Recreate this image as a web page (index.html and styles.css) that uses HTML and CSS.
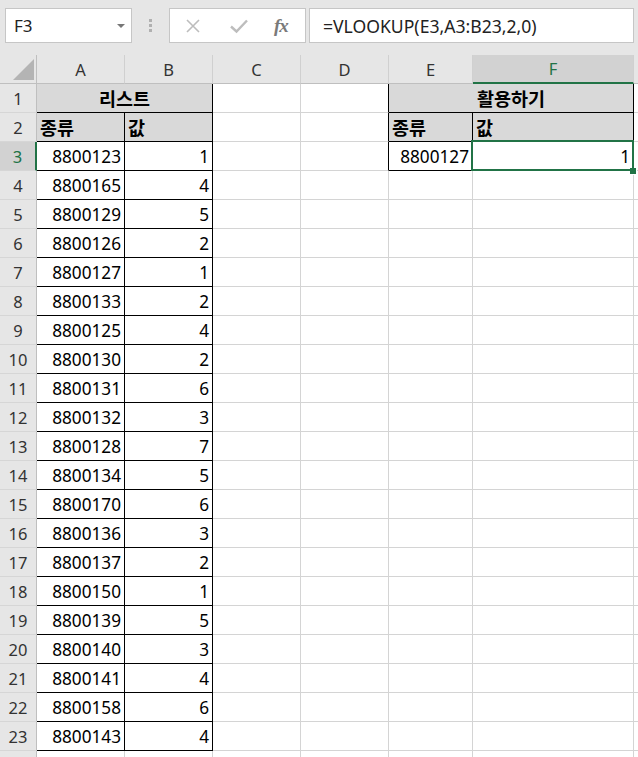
FILE: index.html
```html
<!DOCTYPE html>
<html lang="ko">
<head>
<meta charset="utf-8">
<title>VLOOKUP</title>
<link rel="stylesheet" href="styles.css">
</head>
<body>
<div class="topbar">
  <div class="namebox"><span class="nb-text">F3</span><span class="nb-arrow"></span></div>
  <div class="dots"><i></i><i></i><i></i></div>
  <div class="fxbox">
    <svg class="ico-x" width="16" height="16" viewBox="0 0 16 16"><path d="M2 2L14 14M14 2L2 14" stroke="#bdbdbd" stroke-width="1.6" fill="none"/></svg>
    <svg class="ico-check" width="20" height="16" viewBox="0 0 20 16"><path d="M2 8.5L7.5 13.5L18 2.5" stroke="#bdbdbd" stroke-width="2.4" fill="none"/></svg>
    <span class="fx">fx</span>
  </div>
  <div class="formula">=VLOOKUP(E3,A3:B23,2,0)</div>
</div>

<div class="sheet">
  <div class="row hdr">
    <div class="corner"><svg width="21" height="21" viewBox="0 0 21 21"><path d="M21 0V21H0Z" fill="#b4b4b4"/></svg></div>
    <div class="ch">A</div><div class="ch">B</div><div class="ch">C</div><div class="ch">D</div><div class="ch">E</div><div class="ch sel">F</div><div class="ch last"></div>
  </div>

  <div class="row">
    <div class="rh">1</div>
    <div class="c hd b center span2">리스트</div>
    <div class="c"></div><div class="c bl"></div>
    <div class="c hd b center span2">활용하기</div>
    <div class="c last"></div>
  </div>
  <div class="row">
    <div class="rh">2</div>
    <div class="c hd b">종류</div><div class="c hd b">값</div>
    <div class="c"></div><div class="c bl"></div>
    <div class="c hd b">종류</div><div class="c hd b">값</div>
    <div class="c last"></div>
  </div>
  <div class="row">
    <div class="rh sel">3</div>
    <div class="c b num">8800123</div><div class="c b num">1</div>
    <div class="c"></div><div class="c bl"></div>
    <div class="c b num">8800127</div><div class="c b num">1</div>
    <div class="c last"></div>
  </div>
  <div class="row"><div class="rh">4</div><div class="c b num">8800165</div><div class="c b num">4</div><div class="c"></div><div class="c"></div><div class="c"></div><div class="c"></div><div class="c last"></div></div>
  <div class="row"><div class="rh">5</div><div class="c b num">8800129</div><div class="c b num">5</div><div class="c"></div><div class="c"></div><div class="c"></div><div class="c"></div><div class="c last"></div></div>
  <div class="row"><div class="rh">6</div><div class="c b num">8800126</div><div class="c b num">2</div><div class="c"></div><div class="c"></div><div class="c"></div><div class="c"></div><div class="c last"></div></div>
  <div class="row"><div class="rh">7</div><div class="c b num">8800127</div><div class="c b num">1</div><div class="c"></div><div class="c"></div><div class="c"></div><div class="c"></div><div class="c last"></div></div>
  <div class="row"><div class="rh">8</div><div class="c b num">8800133</div><div class="c b num">2</div><div class="c"></div><div class="c"></div><div class="c"></div><div class="c"></div><div class="c last"></div></div>
  <div class="row"><div class="rh">9</div><div class="c b num">8800125</div><div class="c b num">4</div><div class="c"></div><div class="c"></div><div class="c"></div><div class="c"></div><div class="c last"></div></div>
  <div class="row"><div class="rh">10</div><div class="c b num">8800130</div><div class="c b num">2</div><div class="c"></div><div class="c"></div><div class="c"></div><div class="c"></div><div class="c last"></div></div>
  <div class="row"><div class="rh">11</div><div class="c b num">8800131</div><div class="c b num">6</div><div class="c"></div><div class="c"></div><div class="c"></div><div class="c"></div><div class="c last"></div></div>
  <div class="row"><div class="rh">12</div><div class="c b num">8800132</div><div class="c b num">3</div><div class="c"></div><div class="c"></div><div class="c"></div><div class="c"></div><div class="c last"></div></div>
  <div class="row"><div class="rh">13</div><div class="c b num">8800128</div><div class="c b num">7</div><div class="c"></div><div class="c"></div><div class="c"></div><div class="c"></div><div class="c last"></div></div>
  <div class="row"><div class="rh">14</div><div class="c b num">8800134</div><div class="c b num">5</div><div class="c"></div><div class="c"></div><div class="c"></div><div class="c"></div><div class="c last"></div></div>
  <div class="row"><div class="rh">15</div><div class="c b num">8800170</div><div class="c b num">6</div><div class="c"></div><div class="c"></div><div class="c"></div><div class="c"></div><div class="c last"></div></div>
  <div class="row"><div class="rh">16</div><div class="c b num">8800136</div><div class="c b num">3</div><div class="c"></div><div class="c"></div><div class="c"></div><div class="c"></div><div class="c last"></div></div>
  <div class="row"><div class="rh">17</div><div class="c b num">8800137</div><div class="c b num">2</div><div class="c"></div><div class="c"></div><div class="c"></div><div class="c"></div><div class="c last"></div></div>
  <div class="row"><div class="rh">18</div><div class="c b num">8800150</div><div class="c b num">1</div><div class="c"></div><div class="c"></div><div class="c"></div><div class="c"></div><div class="c last"></div></div>
  <div class="row"><div class="rh">19</div><div class="c b num">8800139</div><div class="c b num">5</div><div class="c"></div><div class="c"></div><div class="c"></div><div class="c"></div><div class="c last"></div></div>
  <div class="row"><div class="rh">20</div><div class="c b num">8800140</div><div class="c b num">3</div><div class="c"></div><div class="c"></div><div class="c"></div><div class="c"></div><div class="c last"></div></div>
  <div class="row"><div class="rh">21</div><div class="c b num">8800141</div><div class="c b num">4</div><div class="c"></div><div class="c"></div><div class="c"></div><div class="c"></div><div class="c last"></div></div>
  <div class="row"><div class="rh">22</div><div class="c b num">8800158</div><div class="c b num">6</div><div class="c"></div><div class="c"></div><div class="c"></div><div class="c"></div><div class="c last"></div></div>
  <div class="row"><div class="rh">23</div><div class="c b num">8800143</div><div class="c b num">4</div><div class="c"></div><div class="c"></div><div class="c"></div><div class="c"></div><div class="c last"></div></div>
  <div class="row"><div class="rh"></div><div class="c"></div><div class="c"></div><div class="c"></div><div class="c"></div><div class="c"></div><div class="c"></div><div class="c last"></div></div>

  <div class="selection"></div>
  <div class="handle"></div>
</div>
</body>
</html>
```

FILE: styles.css
```css
html, body {
  margin: 0;
  padding: 0;
}
body {
  width: 638px;
  height: 757px;
  overflow: hidden;
  background: #e6e6e6;
  font-family: "Noto Sans", "Noto Sans CJK KR", sans-serif;
  color: #000;
}

/* ---------- formula bar ---------- */
.topbar {
  height: 55px;
  display: flex;
  align-items: flex-start;
  padding: 8px 0 0 5px;
  box-sizing: border-box;
}
.namebox, .fxbox, .formula {
  height: 35px;
  box-sizing: border-box;
  background: #fff;
  border: 1px solid #c6c6c6;
  display: flex;
  align-items: center;
}
.namebox {
  width: 127px;
  padding: 0 6px 0 8px;
  justify-content: space-between;
  font-size: 17px;
  color: #222;
}
.nb-arrow {
  width: 0;
  height: 0;
  border-left: 4px solid transparent;
  border-right: 4px solid transparent;
  border-top: 4px solid #777;
}
.dots {
  margin: 11px 0 0 17px;
  display: flex;
  flex-direction: column;
  gap: 2px;
}
.dots i {
  display: block;
  width: 3px;
  height: 3px;
  background: #b0b0b0;
}
.fxbox {
  width: 137px;
  margin-left: 17px;
  padding-left: 15px;
}
.ico-check { margin-left: 28px; }
.fx {
  margin-left: 25px;
  font-family: "Liberation Serif", "DejaVu Serif", serif;
  font-style: italic;
  font-weight: bold;
  font-size: 19px;
  color: #7a7a7a;
  letter-spacing: -1px;
}
.formula {
  width: 325px;
  margin-left: 3px;
  padding-left: 13px;
  font-size: 17.6px;
  color: #222;
}

/* ---------- sheet ---------- */
.sheet {
  position: relative;
}
.row {
  display: grid;
  grid-template-columns: 37px 88px 88px 88px 88px 84px 161px 4px;
  height: 29px;
}
.row > div {
  box-sizing: border-box;
  display: flex;
  align-items: center;
  overflow: hidden;
  white-space: nowrap;
}
.corner, .ch, .rh {
  background: #e6e6e6;
}
.corner {
  border-right: 1px solid #bfbfbf;
  border-bottom: 1px solid #bfbfbf;
  justify-content: flex-end;
  align-items: flex-end !important;
  padding: 0 2px 3px 0;
}
.corner svg { display: block; }
.ch {
  justify-content: center;
  font-size: 16.5px;
  color: #333;
  border-right: 1px solid #d0d0d0;
  border-bottom: 1px solid #bfbfbf;
}
.ch.sel {
  background: #d2d2d2;
  color: #217346;
  border-bottom: 2px solid #217346;
}
.ch.last, .c.last {
  border-right: none;
}
.rh {
  justify-content: center;
  font-size: 16.5px;
  color: #333;
  border-right: 1px solid #bfbfbf;
  border-bottom: 1px solid #d6d6d6;
}
.rh.sel {
  background: #d2d2d2;
  color: #217346;
  border-right: 2px solid #217346;
}
.c {
  background: #fff;
  border-right: 1px solid #d4d4d4;
  border-bottom: 1px solid #d4d4d4;
  font-size: 17.2px;
  padding: 0 3px;
}
.c.b {
  border-right-color: #000;
  border-bottom-color: #000;
}
.c.bl {
  border-right-color: #000;
}
.c.hd {
  background: #d9d9d9;
  font-family: "Noto Sans CJK KR", sans-serif;
  font-weight: 700;
  font-size: 18.5px;
}
.c.center {
  justify-content: center;
}
.c.span2 {
  grid-column: span 2;
}
.c.num {
  justify-content: flex-end;
}

/* active cell overlay */
.selection {
  position: absolute;
  left: 471px;
  top: 85px;
  width: 163px;
  height: 31px;
  box-sizing: border-box;
  border: 2px solid #217346;
}
.handle {
  position: absolute;
  left: 630px;
  top: 113px;
  width: 6px;
  height: 6px;
  background: #217346;
  box-shadow: 1px 1px 0 #fff;
}
```
